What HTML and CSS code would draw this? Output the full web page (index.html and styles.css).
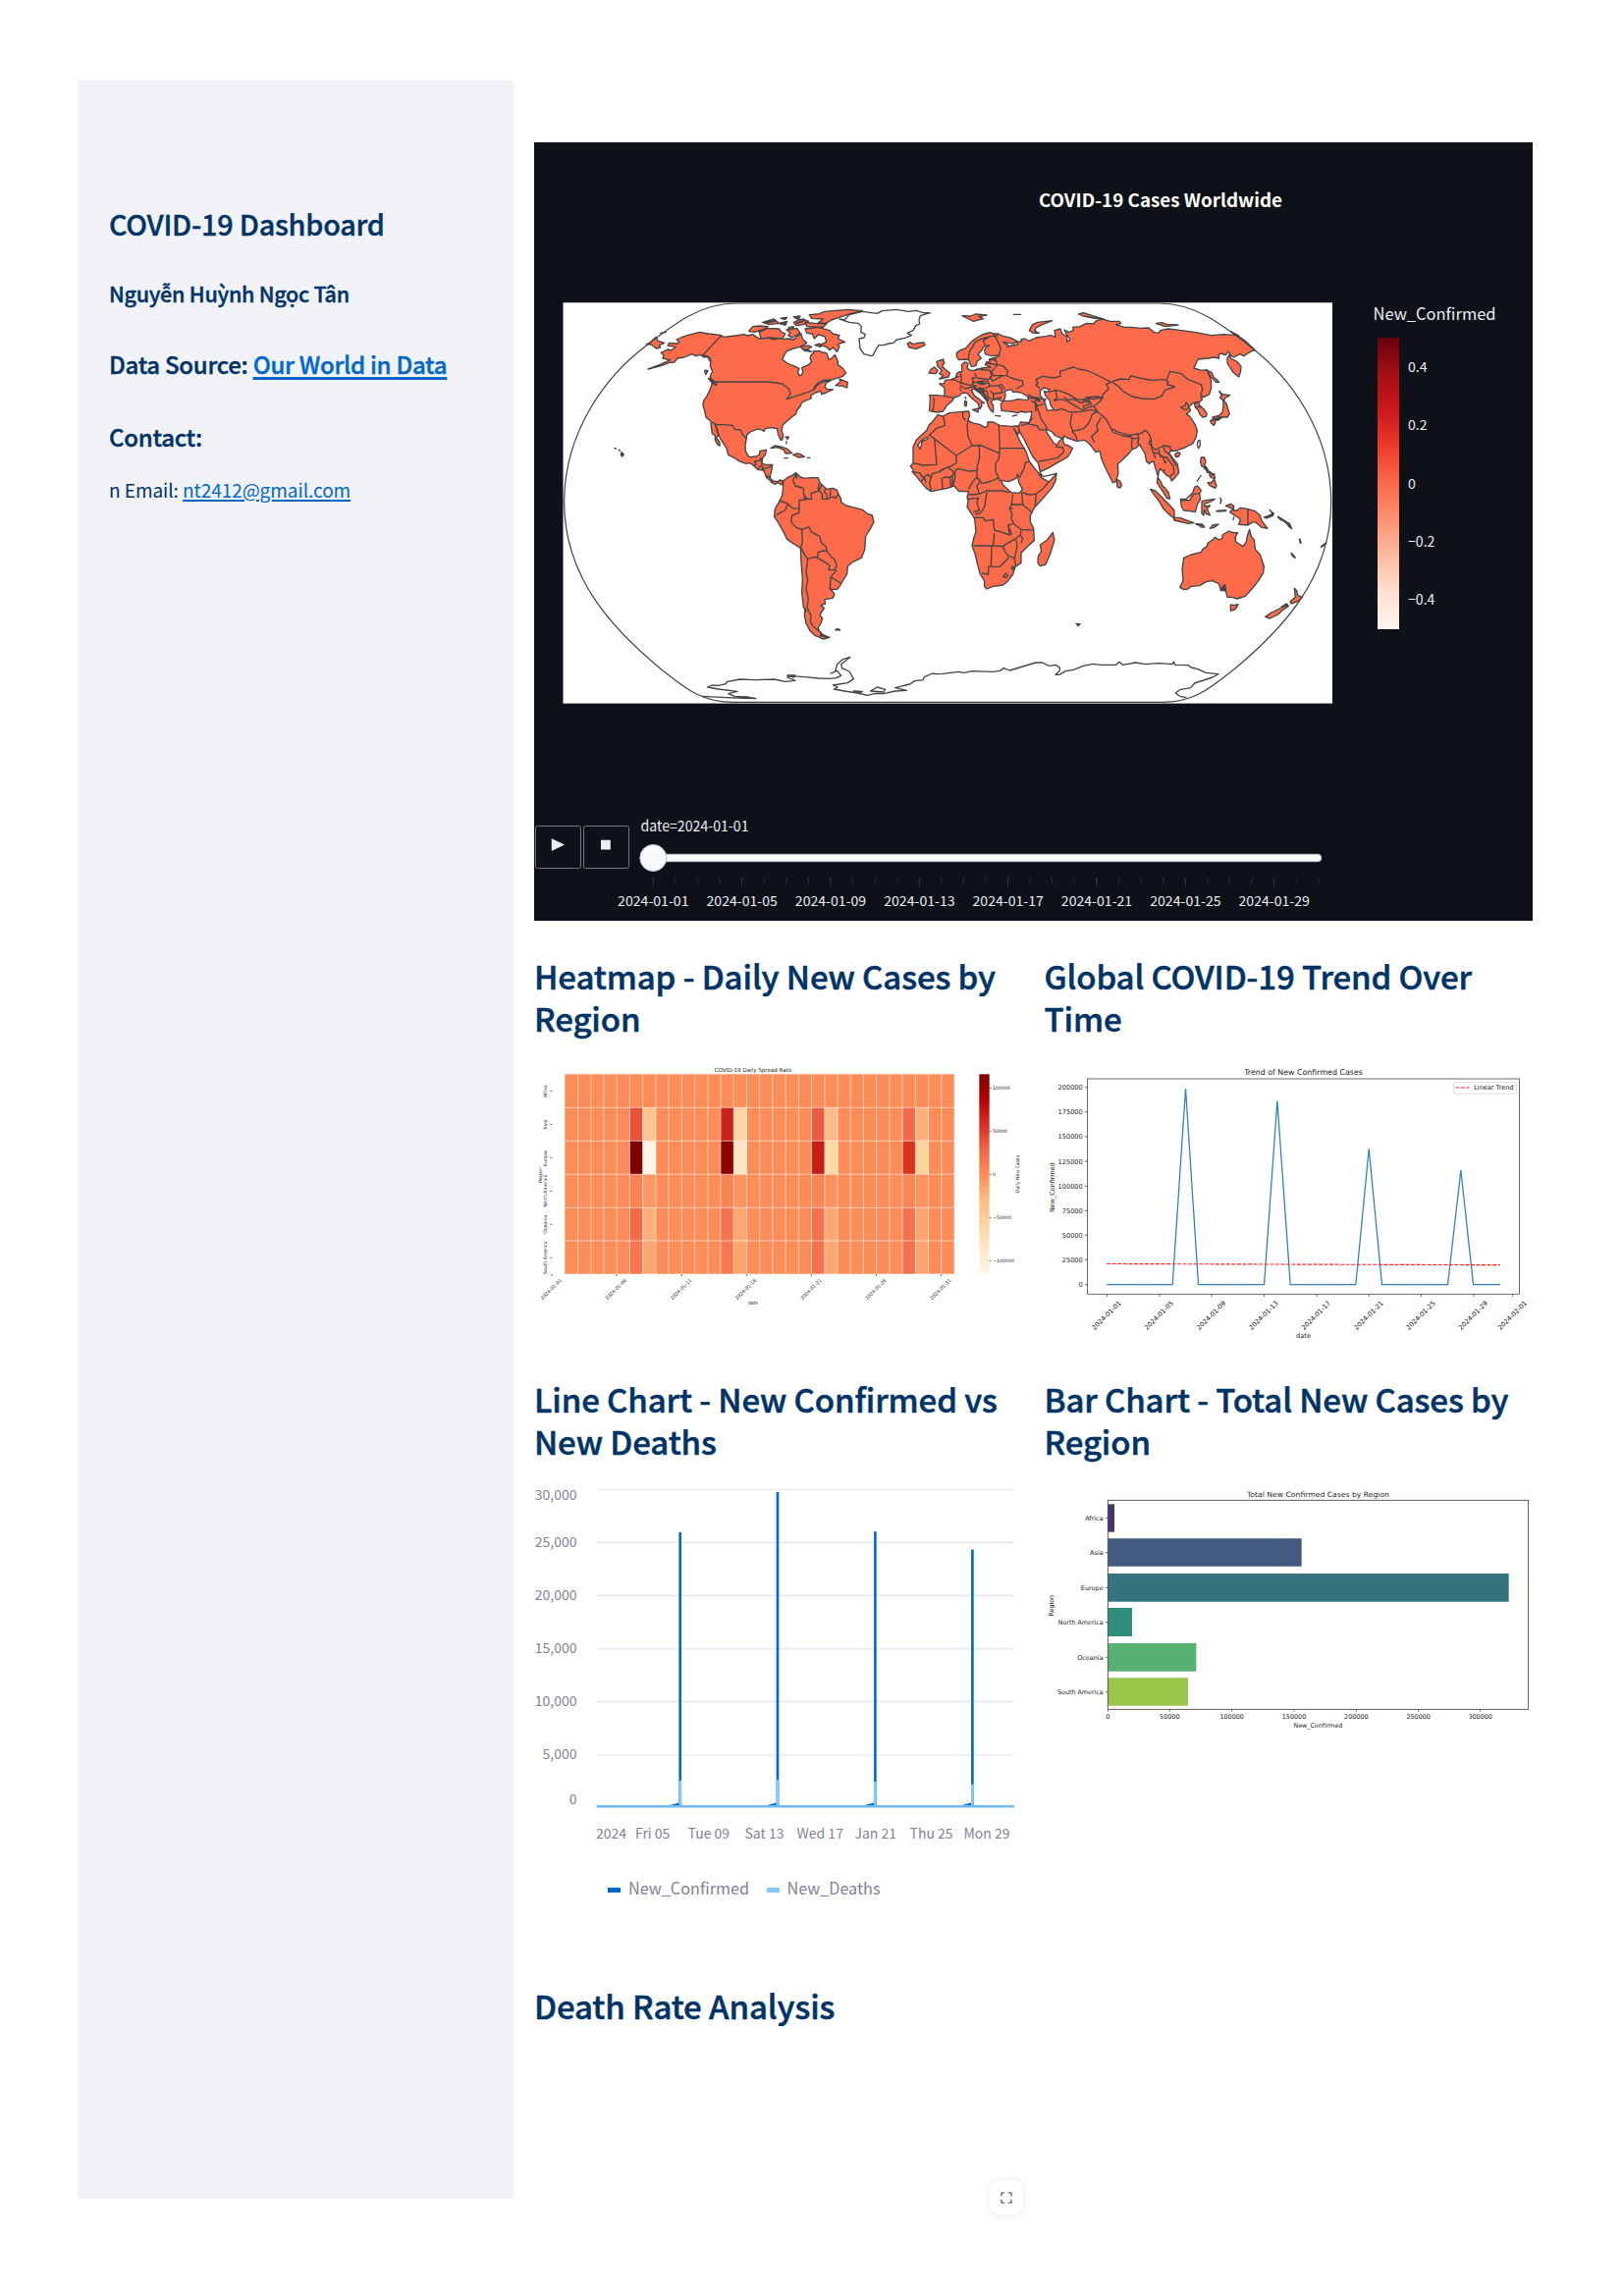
FILE: index.html
```html
<!DOCTYPE html>
<html lang="en">
<head>
<meta charset="utf-8">
<title>COVID-19 Dashboard</title>
<link rel="stylesheet" href="styles.css">
</head>
<body>
<div class="page">
<aside class="sidebar">
  <h1 class="side-title">COVID-19 Dashboard</h1>
  <h4 class="side-author">Nguyễn Huỳnh Ngọc Tân</h4>
  <h3 class="side-source">Data Source: <a href="#">Our World in Data</a></h3>
  <h3 class="side-contact">Contact:</h3>
  <p class="side-email">n Email: <a href="#">nt2412@gmail.com</a></p>
</aside>
<main class="main">
<svg class="map-panel" viewBox="544 145 1017 792.5">
  <defs>
    <linearGradient id="reds" x1="0" y1="1" x2="0" y2="0">
      <stop offset="0" stop-color="#fff5f0"/><stop offset=".125" stop-color="#fee0d2"/><stop offset=".25" stop-color="#fcbba1"/><stop offset=".375" stop-color="#fc9272"/><stop offset=".5" stop-color="#fb6a4a"/><stop offset=".625" stop-color="#ef3b2c"/><stop offset=".75" stop-color="#cb181d"/><stop offset=".875" stop-color="#a50f15"/><stop offset="1" stop-color="#67000d"/>
    </linearGradient>
  </defs>
  <rect class="panel-bg" x="544" y="145" width="1017" height="793"/>
  <text class="map-title" x="1058" y="210.7" textLength="248" lengthAdjust="spacingAndGlyphs">COVID-19 Cases Worldwide</text>
  <rect x="573.5" y="308.3" width="783.5" height="408.3" fill="#fff"/>
  <g transform="translate(540 290) scale(.333333)" class="land">
    <!-- Americas -->
    <path d="M400,208L420,198 430,201 445,190 420,186 425,178 450,180 456,175 447,168 460,162 480,155 518,145 545,150 580,154 592,160 625,156 655,152 662,156 680,152 692,160 700,165 715,158 725,160 740,168 765,162 775,166 790,165 805,168 815,158 828,150 832,166 845,178 825,190 800,197 785,203 778,212 770,228 785,240 810,250 822,256 818,268 822,278 830,276 833,266 830,254 850,245 860,235 855,225 858,215 867,207 865,203 885,203 892,207 905,208 912,228 920,226 925,220 932,215 940,235 940,245 955,255 965,270 955,280 925,290 895,292 880,300 870,310 865,322 880,305 895,297 920,292 905,300 900,312 908,320 925,320 905,330 890,335 888,325 872,330 858,338 858,348 840,355 830,360 825,372 815,384 812,395 795,408 772,428 768,445 773,462 770,474 765,475 757,455 755,440 735,437 718,440 715,448 700,441 690,443 672,450 662,460 660,475 657,490 658,508 665,522 672,527 690,525 700,520 702,508 722,505 718,520 710,530 708,547 720,550 740,550 738,565 732,590 742,600 755,602 763,597 773,600 768,612 758,605 748,610 735,603 735,600 722,590 718,578 712,567 695,565 682,553 672,545 660,547 640,540 625,530 605,520 600,500 590,485 578,465 572,445 565,428 575,460 568,468 578,480 580,492 574,490 565,475 565,462 556,455 553,435 552,418 537,405 533,385 528,370 530,355 540,340 550,320 557,298 550,280 557,265 550,250 552,228 545,220 530,222 520,214 505,218 495,212 470,222 450,225 440,237 425,238 400,248 360,258 395,245 415,236 428,230 405,225 408,215Z"/>
    <path class="border" d="M560,297H730L770,303 790,318 795,335 783,350 820,338 850,328 865,322M585,154L527,216 540,218 550,235M555,420L568,428 590,428 618,430 625,442 643,444 650,460 660,470M682,553L690,550 685,540 700,538 705,530 708,547M695,562L707,552 715,570M707,562L725,560 740,552M722,585L736,588M740,600L742,605"/>
    <path d="M668,142L680,128 700,126 727,128 710,138 685,145ZM700,145L725,133 760,135 768,145 780,150 770,165 730,162 705,165ZM783,138L815,133 825,148 800,162 788,155 795,148ZM840,135L880,130 915,140 925,150 945,155 940,165 962,175 940,182 945,190 938,205 925,192 915,200 905,190 885,185 905,175 900,158 880,153 868,165 862,150 845,148ZM853,92L880,90 900,82 970,76 1015,80 975,90 960,95 935,103 920,108 905,118 880,116 895,105 860,103ZM840,115L870,118 905,120 895,130 845,128ZM710,115L745,105 753,112 760,118 730,122ZM765,103L785,100 780,106ZM760,118L785,112 780,124ZM805,98L825,96 820,106ZM805,115L820,108 835,105 850,112 835,122 812,125ZM788,132L805,128 800,138ZM825,190L850,186 860,190 845,198 860,205 838,202ZM870,185L885,180 888,190ZM933,308L948,296 945,288 955,292 970,298 968,315 955,310ZM355,182L365,178 385,160 390,172 410,178 395,185 398,192 385,195 370,183ZM398,148L415,145 405,147ZM256,499L264,502M269,504L276,508M280,512L286,520 280,525 277,518ZM545,285L555,290 570,300 568,308 555,300ZM533,262L543,262 536,275ZM735,500L748,492 770,496 785,502 800,515 780,516 775,505 755,497ZM803,520L815,516 825,518 838,526 820,528ZM775,530L788,530M845,529L856,529M778,466L790,465 785,475M782,478L784,487"/>
    <path class="smudge" d="M716,117L750,110M768,103L782,102M765,119L780,117M808,101L820,99M812,118L838,110M835,197L855,203M545,288L565,303M278,515L283,522"/>
    <path class="no-data" d="M945,105L960,108 975,92 1015,82 1060,88 1075,80 1120,76 1155,82 1180,79 1200,86 1222,86 1192,95 1188,108 1190,120 1178,125 1170,140 1152,148 1165,155 1145,163 1120,168 1110,178 1095,180 1080,185 1065,185 1055,200 1048,215 1043,218 1020,212 1008,195 1005,165 1020,162 1024,152 1010,145 1012,128 1003,118 975,115Z"/>
    <path d="M1152,180L1160,176 1170,182 1185,178 1203,177 1206,185 1180,196 1158,192Z"/>
    <path d="M773,600L785,590 800,583 812,575 818,580 825,588 840,592 855,590 880,590 885,605 895,615 905,625 925,622 937,628 942,640 950,655 950,665 965,675 985,680 1015,688 1030,700 1045,705 1050,725 1040,745 1025,768 1022,810 1012,835 985,848 970,860 968,885 955,905 948,918 940,930 925,932 915,928 930,945 925,958 900,962 902,975 888,980 898,988 885,1010 893,1020 888,1035 880,1048 883,1060 895,1070 915,1078 895,1083 870,1072 855,1058 843,1035 838,1010 840,992 835,985 832,960 830,940 832,900 828,850 826,805 805,792 785,778 772,752 765,740 755,722 746,710 748,685 760,665 770,645 773,615Z"/>
    <path class="border" d="M812,578L803,598 810,615 835,622 836,640 845,655 860,655 858,638 882,630 890,612M882,608L880,625 892,640 892,655 908,655 905,640 898,632 902,625M908,655L925,648 933,652 942,640M918,625L916,650M845,658L838,648 838,658 822,658 822,697M760,660L785,668 800,682 822,685M788,670L778,690 762,698 752,706M822,697L800,705 797,725 812,742 830,748 832,785 826,805M830,748L852,740 858,755 885,770 890,790 903,800 907,815 895,813 880,818 878,835M878,835L900,848 915,858 912,872 930,872 937,858 930,840 920,832 907,815M828,805L838,825 848,838 870,832 878,835M848,838L843,880 848,900 843,930 850,960 846,985 852,1000 858,1010 856,1030 865,1045 885,1060M888,1060V1078M918,893L948,912M918,893L916,930M937,872L918,893"/>
    <path class="smudge" d="M932,1056L938,1053 948,1056M838,988L843,1000M885,1070L908,1078M812,576L814,592"/>
    <path class="border" d="M525,1258L600,1262 690,1265 665,1260 625,1258 605,1250 633,1243 575,1236 542,1230 555,1224 575,1225 598,1220 600,1214 640,1206 690,1208 745,1206 780,1213 810,1210 785,1200 795,1196 840,1199 880,1203 910,1204 935,1202 950,1195 938,1180 918,1188 932,1182 938,1160 955,1145 978,1138 950,1160 953,1172 975,1182 988,1205 970,1217 925,1224 940,1230 928,1236 960,1242 1000,1248 1030,1255 1055,1249 1080,1250 1115,1242 1150,1240 1115,1232 1130,1228 1160,1221 1175,1211 1200,1208 1205,1198 1230,1188 1240,1190 1260,1189 1310,1183 1325,1186 1350,1181 1415,1183 1435,1180 1447,1172 1465,1179 1545,1155 1565,1155 1580,1163 1590,1165 1605,1162 1618,1170 1618,1180 1605,1192 1617,1192 1635,1181 1660,1177 1690,1165 1720,1159 1745,1162 1790,1162 1800,1153 1810,1162 1850,1155 1880,1160 1920,1157 1962,1160 1966,1152 1970,1162 2010,1163 2020,1170 2040,1175 2065,1186 2103,1190 2085,1200 2030,1218 2018,1232 1985,1238 1972,1248 1985,1258 2005,1262M1040,1242L1060,1230 1085,1237 1080,1245ZM785,1194L810,1194 805,1200ZM988,1242L1015,1243 1005,1248Z"/>
  </g>
  <g transform="translate(940 290) scale(.333333)" class="land">
    <!-- Eurasia -->
    <path d="M103,208L115,200 130,195 150,172 165,162 180,153 205,146 215,150 230,150 245,157 270,163 287,173 280,180 262,178 245,175 260,184 258,190 270,186 290,184 285,172 300,176 300,168 310,165 325,172 345,162 375,158 390,155 405,160 402,140 420,135 425,150 440,158 440,175 450,168 438,150 432,138 445,145 460,140 458,130 480,128 500,118 520,120 530,110 550,105 570,112 600,112 605,118 590,122 615,130 635,130 665,133 690,132 705,145 720,148 725,140 750,135 790,140 830,145 880,155 920,152 960,155 985,172 1015,200 1000,205 980,218 968,212 950,222 938,214 940,225 960,235 972,250 970,268 965,282 948,268 930,240 930,225 938,210 932,205 925,215 910,210 903,215 905,225 890,222 870,225 840,228 828,255 850,262 868,260 880,290 881,315 875,335 862,342 850,345 853,352 843,360 845,370 858,380 868,395 865,403 855,405 845,395 842,385 832,375 830,365 840,358 825,362 818,368 805,382 795,380 788,375 800,370 805,360 810,368 818,385 805,395 815,402 830,425 838,445 835,465 825,485 800,498 780,505 772,508 758,507 752,515 765,532 778,548 782,575 770,590 760,600 755,588 745,583 735,573 725,562 720,575 718,590 728,605 732,615 740,622 750,635 755,655 745,652 735,635 728,625 715,605 718,585 710,560 705,540 698,542 690,547 683,540 678,515 668,500 662,488 650,500 640,503 630,515 612,533 595,548 597,575 590,602 580,605 570,585 555,555 545,530 540,508 528,512 510,488 495,475 470,478 440,468 432,462 425,470 405,462 395,450 385,445 375,440 380,455 392,472 400,485 410,490 415,480 430,465 428,478 432,488 445,492 457,500 450,515 440,528 410,545 380,562 358,572 352,545 335,525 320,495 308,470 298,455 290,440 298,420 325,422 330,405 333,388 310,390 300,387 290,392 270,388 240,385 238,365 245,357 228,350 215,352 208,358 215,370 215,390 208,385 200,372 195,355 175,332 155,318 148,322 158,340 172,350 188,362 178,362 180,370 174,380 168,362 150,348 135,332 122,330 110,340 95,345 90,355 72,370 62,387 45,390 30,388 20,385 22,345 20,338 40,338 66,340 66,315 50,303 65,302 68,292 85,290 100,285 103,272 112,266 120,265 118,245 128,236 138,240 135,255 145,262 158,262 180,255 208,252 190,245 195,235 205,238 202,228 225,222 235,215 210,218 190,212 188,198 202,185 185,190 180,200 168,212 178,225 165,235 162,248 148,250 140,230 125,228 110,230 103,220Z"/>
    <path class="no-data" d="M250,325L270,320 275,328 285,328 300,330 325,345 320,353 290,350 270,355 247,355 252,340ZM358,325L370,315 387,320 380,328 370,325 375,340 388,355 390,368 400,382 380,385 375,368 368,350 358,338Z"/>
    <path class="border" d="M358,318L345,305 352,302 345,290 365,280 400,285 420,280 418,265 460,252 475,258 500,262 520,270 575,298 560,305 568,318 550,335 548,345 530,342 500,345 490,352 470,350 445,335 420,325 405,322 385,328M578,296L605,288 630,290 635,278 660,285 700,292 740,290 750,298 745,305 770,312 740,322 730,340 705,350 670,348 640,342 610,325 600,312 578,298M745,290L755,265 790,272 810,290 850,305 855,320 848,335 855,345M550,345L540,358 522,372 535,390 550,402 560,412 575,440 600,452 630,460 665,455 680,445 690,455 697,472 690,485 710,505 735,492 755,495 758,507M578,440L578,450 610,462 635,465 635,458M635,465L640,470 660,470 655,455M545,405L530,430 535,445 515,465 525,483M455,395L450,425 458,448 490,440 505,425 512,410 518,395 535,388M400,385L425,380 450,390 480,388 515,382 530,388M455,448L468,462 470,475M345,370L355,390 360,410 375,430 378,440M300,430L320,425 350,432 355,442 372,445M320,425L335,408M355,540L380,535 410,530 430,512 428,498 405,495M345,345L343,360 345,388M405,322L410,345 400,355M400,355L420,350 440,355 465,370 490,385M430,345L445,352 460,350 485,362 505,350 515,365 490,370 492,380 520,370M500,345L520,350 550,345M640,470L637,490 640,503M660,470L655,485 662,488M697,472L700,505 705,515 710,530M705,515L720,515 735,530 740,545 745,540M720,505L725,525 745,528 765,555 768,575 755,585M735,495L740,510 755,520 775,555M735,565L740,570M832,375L852,372M318,345L345,348 375,350 370,360M330,355L345,362 350,370 370,365M320,335L340,345 355,345"/>
    <path class="border" d="M138,230L142,205 160,175 180,165 205,158 230,155M190,185L185,170 202,160M215,152L225,165 238,195 232,212M195,240L228,245 250,250M205,228L225,232M220,222L228,245 210,265 215,278 255,278 260,265 245,250M205,280L212,295 245,278M255,278L270,285 305,295 305,308 285,318M158,262L165,258 205,262 210,280 200,290 165,285 158,270M115,268L118,290 115,300 145,308 155,300 150,285 160,285M85,290L100,292 115,300M100,282L112,280M112,308L130,318 165,308M118,325L112,315M150,300L175,295 200,295M165,300L180,305 200,300 205,310 185,318 170,315M165,318L185,325 190,345M175,320L195,325 200,345 210,350M205,310L230,308 240,318 243,330 215,333 205,325M215,333L215,350 240,345M230,308L240,305 250,320M30,345L35,350 30,388M65,340L95,347M175,320L195,350"/>
    <path class="smudge" d="M152,306L165,322 185,332 200,355M345,350L358,357M492,352L508,361M172,300L188,301"/>
    <path d="M42,235L62,228 65,240 58,250 72,262 82,270 78,282 50,288 62,278 50,272 58,262 45,250ZM18,270L25,258 35,252 45,262 40,272ZM152,382L170,378 168,390ZM128,355L134,358 132,372 127,368ZM129,342L132,350M220,400L238,402M273,402L289,398M325,140L335,122 350,115 395,110 365,122 345,132 342,142 355,148 335,147ZM120,95L145,96 160,90 195,93 170,98 185,104 155,112 140,105ZM275,91L300,91M475,90L490,86 520,96 550,105 520,102 490,96ZM712,118L730,116 745,121 780,123 740,128ZM940,143L955,150 965,156 950,150ZM868,262L882,268 888,282 905,298 895,298 878,280ZM905,325L915,335 938,338 925,345 918,355 908,345 913,338ZM918,352L928,365 932,380 937,395 930,405 905,405 890,412 885,405 905,400 915,390 918,370ZM878,415L895,412 892,425 888,430 880,422ZM895,410L912,408 900,415ZM770,518L778,512 786,515 782,525 773,527ZM592,595L602,600 607,612 603,621 594,618ZM850,528L860,528 864,540 860,552 868,560 852,555 848,542ZM862,562L880,575 870,575ZM875,580L890,578 892,592 880,590ZM870,605L880,605 890,595 897,615 893,622 878,615ZM850,582L837,602M787,655L805,655 825,635 830,618 838,615 850,628 845,640 848,655 838,672 832,695 815,692 797,690 790,678ZM790,660L815,658 828,640 845,638M695,625L710,630 740,660 755,675 768,690 768,712 755,705 735,685 720,660 705,640ZM765,712L785,712 800,718 828,728 810,730 768,720ZM832,732L855,732M845,740L862,742M877,745L885,735 903,732 890,742ZM852,662L870,658 892,655 875,665 860,670 862,678 877,675 868,685 877,705 865,700 860,688 858,705 852,700ZM908,650L912,660 908,670M895,692L928,690M950,708L948,720M925,676L940,670 950,677 948,690 960,690 970,682 990,685 1015,692 1030,705 1035,722 1053,745 1035,742 1015,725 1005,727 993,735 965,733 970,720 965,712 945,700 938,695 947,685ZM993,686V735M1040,710L1050,714 1068,706M1058,688L1072,700 1068,708M1083,708L1092,718 1110,725 1120,730 1127,746 1115,736M1150,775L1155,792M1125,820L1138,835 1130,830ZM1215,803L1222,796 1234,788"/>
    <path d="M797,835L820,825 850,818 855,808 868,800 870,790 885,780 892,772 905,780 915,775 915,765 935,753 948,758 962,758 955,770 955,785 965,792 978,800 988,785 992,765 998,748 1003,770 1012,780 1015,808 1030,825 1035,840 1042,860 1040,880 1025,905 1005,930 985,952 960,960 945,955 930,955 925,935 910,935 905,915 885,905 865,908 845,920 820,922 810,930 797,932 785,925 795,905 792,870 795,850ZM940,978L950,980 963,977 955,992 940,997ZM1135,928L1142,935 1145,950 1160,955 1145,968 1125,975 1122,968 1138,955ZM1110,975L1117,982 1098,995 1085,1008 1060,1020 1046,1015 1065,1002 1090,990ZM468,1036L480,1037 475,1043Z"/>
    <path class="smudge" d="M922,918L925,935 912,930ZM858,560L872,566M873,570L888,582M1095,985L1115,978M835,732L860,738M1085,710L1108,724 1124,742M1045,711L1066,704 1070,697M1126,822L1136,832M1218,801L1228,793M1151,778L1154,790M898,692L926,691M882,413L905,409"/>
    <path class="no-data" d="M840,478L846,475 847,490 842,500 838,490Z"/>
    <!-- Africa -->
    <path d="M45,398L62,402 80,392 120,388 140,387 143,400 138,415 150,422 175,428 190,437 197,432 198,420 215,420 235,430 270,433 290,432 295,445 290,458 278,440 300,485 315,510 325,540 340,560 352,575 362,590 380,597 408,577 405,600 395,620 365,655 340,682 328,705 328,725 338,745 340,782 325,795 300,820 300,850 282,862 275,885 260,905 245,918 215,922 195,930 188,922 188,905 175,885 168,860 160,825 150,798 155,775 162,755 158,715 150,702 135,680 138,662 135,648 140,632 128,632 110,632 95,615 75,622 60,625 45,628 25,632 10,622 0,610 -15,592 -30,575 -30,565 -38,555 -30,545 -30,495 -20,475 0,455 12,445 18,430 30,418Z"/>
    <path class="border" d="M62,402L68,430 40,440 20,460 102,522 150,492 165,492 175,490 232,515M122,388L122,405 130,415M138,415L135,432 138,465 150,490M232,430L235,500 312,500M235,500L232,532 222,545 222,570 235,600M172,492L173,530 165,560 168,568M102,522L102,545 85,555 65,562 50,570M98,570L105,562 140,570 165,568 165,588 150,605 140,625M98,570L98,590 92,612M165,588L175,600 180,608 210,600 232,590M35,470L42,550 0,552 -30,545M35,470L20,460M25,590L28,578 50,572 75,558 90,568 95,580 82,588 60,590M58,590L60,625M82,588L85,620M90,585V615M-35,572L-10,575 0,590 15,580 25,590 20,605 25,630M-8,602L5,592 10,605M175,600L165,615 172,640 140,642M172,640L195,630 240,630 265,635M325,540L312,545 310,560 302,575 295,590M302,635L325,642 345,640 365,625 385,603M345,640L343,678M302,635L305,672 335,698M275,640L270,672 305,672M195,635L188,680 175,698 160,702M158,712L185,712 190,722 215,718 218,750 235,755 265,765 260,735 272,732M270,672L265,685 272,700 270,715 278,732 300,748 335,750M138,655L170,652 165,665 172,690 155,695M155,798L215,798 218,760M215,798L245,800 262,788 285,775 298,765 300,748M285,780L288,800 280,835 262,830 248,812 245,800M210,800L208,860 200,862 200,885 180,882M208,862L235,862 262,835M280,835L283,860M262,740L272,765M298,765L305,775 300,790M252,883L260,888 255,896 245,893ZM275,861L280,866 275,872 270,866ZM265,680L275,685"/>
    <path class="no-data" d="M238,598L262,602 285,592 290,578 292,602 304,625 295,637 270,635 255,622 245,612ZM357,574L368,587 408,577 385,603 362,590ZM-16,490L0,472 15,465 15,472 -2,478 -8,502Z"/>
    <path d="M397,757L402,780 390,820 375,855 358,860 351,850 352,830 362,815 358,795 380,780Z"/>
  </g>
  <g transform="translate(540 290) scale(.333333)">
    <path class="globe-line" d="M630,57C520,57 440,120 355,186C230,280 104,450 104,665C104,900 260,1060 400,1175C470,1230 520,1276 620,1276H1931C2031,1276 2081,1230 2151,1175C2291,1060 2447,900 2447,665C2447,450 2321,280 2196,186C2111,120 2031,57 1921,57Z"/>
  </g>
  <rect x="1403" y="344" width="22" height="297" fill="url(#reds)"/>
  <g class="map-text">
    <text x="1398.5" y="326" font-size="16.8" textLength="125" lengthAdjust="spacingAndGlyphs">New_Confirmed</text>
    <text x="1434" y="379">0.4</text><text x="1434" y="438.2">0.2</text><text x="1434" y="498">0</text><text x="1434" y="557">−0.2</text><text x="1434" y="616">−0.4</text>
    <text x="652.5" y="847" font-size="15" textLength="110" lengthAdjust="spacingAndGlyphs">date=2024-01-01</text>
    <g text-anchor="middle">
      <text x="665.3" y="922.6">2024-01-01</text><text x="755.7" y="922.6">2024-01-05</text><text x="846" y="922.6">2024-01-09</text><text x="936.4" y="922.6">2024-01-13</text><text x="1026.7" y="922.6">2024-01-17</text><text x="1117" y="922.6">2024-01-21</text><text x="1207.4" y="922.6">2024-01-25</text><text x="1297.7" y="922.6">2024-01-29</text>
    </g>
  </g>
  <g class="map-button"><rect x="545.5" y="841.5" width="46" height="43" rx="2"/><rect x="594.5" y="841.5" width="46" height="43" rx="2"/></g>
  <path fill="#e9edf5" d="M561.8,854.3L575,860.6 561.8,867ZM612,855.8H621.8V865.6H612Z"/>
  <path stroke="#333" stroke-width="5.5" stroke-dasharray="1 21.58" d="M664.8,896.8H1344"/>
  <path stroke="#333" stroke-width="9" stroke-dasharray="1 89.33" d="M664.8,898.5H1344"/>
  <rect class="rail" x="655" y="870.3" width="690.7" height="7.4" rx="3.5"/>
  <circle class="rail" cx="665.3" cy="874" r="13.5"/>
</svg>

<div class="grid">
<section>
<h2>Heatmap - Daily New Cases by Region</h2>
<svg class="chart-top" viewBox="544 1059 497.5 343.5">
<g transform="translate(540 1070) scale(.333333)" class="plot">
  <rect x="106" y="73" width="1190" height="611" fill="#fc8d59"/>
  <path fill="#e6533a" d="M304,175h40v102h-40z"/><path fill="#7f0000" d="M304,277h40v102h-40z"/><path fill="#fa8355" d="M304,379h40v102h-40z"/><path fill="#f16a4a" d="M304,481h40v102h-40z"/><path fill="#f57550" d="M304,583h40v101h-40z"/>
  <path fill="#fdc590" d="M344,175h40v102h-40z"/><path fill="#fff6ea" d="M344,277h40v102h-40z"/><path fill="#fc9863" d="M344,379h40v102h-40z"/><path fill="#fdb07b" d="M344,481h40v102h-40z"/><path fill="#fda671" d="M344,583h40v101h-40z"/>
  <path fill="#c8221a" d="M582,175h40v102h-40z"/><path fill="#8b0000" d="M582,277h40v102h-40z"/><path fill="#fa8253" d="M582,379h40v102h-40z"/><path fill="#f5734e" d="M582,481h40v102h-40z"/><path fill="#f77850" d="M582,583h40v101h-40z"/>
  <path fill="#fdd8a5" d="M622,175h40v102h-40z"/><path fill="#fee5c6" d="M622,277h40v102h-40z"/><path fill="#fc9560" d="M622,379h40v102h-40z"/><path fill="#fda772" d="M622,481h40v102h-40z"/><path fill="#fda56f" d="M622,583h40v101h-40z"/>
  <path fill="#ea5d43" d="M860,175h40v102h-40z"/><path fill="#c51e15" d="M860,277h40v102h-40z"/><path fill="#fa8655" d="M860,379h40v102h-40z"/><path fill="#f4724e" d="M860,481h40v203h-40z"/>
  <path fill="#fdbc87" d="M900,175h40v102h-40z"/><path fill="#fddaa8" d="M900,277h40v102h-40z"/><path fill="#fc935e" d="M900,379h40v102h-40z"/><path fill="#fda772" d="M900,481h40v203h-40z"/>
  <path fill="#ef6b4c" d="M1138,175h40v102h-40z"/><path fill="#d8331f" d="M1138,277h40v102h-40z"/><path fill="#f98755" d="M1138,379h40v102h-40z"/><path fill="#f4724e" d="M1138,481h40v203h-40z"/>
  <path fill="#fdb07a" d="M1178,175h40v102h-40z"/><path fill="#fdd39c" d="M1178,277h40v102h-40z"/><path fill="#fc925d" d="M1178,379h40v102h-40z"/><path fill="#fda570" d="M1178,481h40v203h-40z"/>
  <path stroke="#fff" stroke-opacity=".55" stroke-width="611" stroke-dasharray="3 36.67" d="M144.2,378.5H1296"/>
  <path stroke="#fff" stroke-opacity=".55" stroke-width="1190" stroke-dasharray="3 98.83" d="M701,173.5V684"/>
  <linearGradient id="orrd" x1="0" y1="1" x2="0" y2="0"><stop offset="0" stop-color="#fff7ec"/><stop offset=".125" stop-color="#fee8c8"/><stop offset=".25" stop-color="#fdd49e"/><stop offset=".375" stop-color="#fdbb84"/><stop offset=".5" stop-color="#fc8d59"/><stop offset=".625" stop-color="#ef6548"/><stop offset=".75" stop-color="#d7301f"/><stop offset=".875" stop-color="#b30000"/><stop offset="1" stop-color="#7f0000"/></linearGradient>
  <rect x="1372" y="73" width="31" height="611" fill="url(#orrd)"/>
  <path class="tick" d="M61,124h6M61,226h6M61,328h6M61,430h6M61,532h6M61,634h6M66,684v6M264,684v6M463,684v6M661,684v6M859,684v6M1057,684v6M1256,684v6M1403,115h6M1403,247h6M1403,379h6M1403,511h6M1403,643h6"/>
  <text x="563" y="65" font-size="17" textLength="236" lengthAdjust="spacingAndGlyphs">COVID-19 Daily Spread Rate</text>
  <g font-size="14.5" text-anchor="middle">
    <text transform="translate(52 125) rotate(-90)" textLength="38" lengthAdjust="spacingAndGlyphs">Africa</text><text transform="translate(52 227) rotate(-90)" textLength="29" lengthAdjust="spacingAndGlyphs">Asia</text><text transform="translate(52 330) rotate(-90)" textLength="48" lengthAdjust="spacingAndGlyphs">Europe</text><text transform="translate(52 430) rotate(-90)" textLength="99" lengthAdjust="spacingAndGlyphs">North America</text><text transform="translate(52 532) rotate(-90)" textLength="56" lengthAdjust="spacingAndGlyphs">Oceania</text><text transform="translate(52 634) rotate(-90)" textLength="100" lengthAdjust="spacingAndGlyphs">South America</text>
    <text transform="translate(35 381) rotate(-90)" textLength="48" lengthAdjust="spacingAndGlyphs">Region</text><text transform="translate(1494 378) rotate(-90)" textLength="114" lengthAdjust="spacingAndGlyphs">Daily New Cases</text>
    <text x="681" y="776" textLength="30" lengthAdjust="spacingAndGlyphs">date</text>
  </g>
  <g font-size="14.5" text-anchor="end">
    <text transform="translate(97 704) rotate(-45)">2024-01-01</text><text transform="translate(295 704) rotate(-45)">2024-01-06</text><text transform="translate(494 704) rotate(-45)">2024-01-11</text><text transform="translate(692 704) rotate(-45)">2024-01-16</text><text transform="translate(891 704) rotate(-45)">2024-01-21</text><text transform="translate(1089 704) rotate(-45)">2024-01-26</text><text transform="translate(1287 704) rotate(-45)">2024-01-31</text>
  </g>
  <g font-size="14.2"><text x="1413" y="120">100000</text><text x="1413" y="252">50000</text><text x="1413" y="384">0</text><text x="1413" y="516">−50000</text><text x="1413" y="648">−100000</text></g>
</g>
</svg>
</section>
<section>
<h2>Global COVID-19 Trend Over Time</h2>
<svg class="chart-top" viewBox="1063.5 1059 497.5 343.5">
<g transform="translate(1049.7 1070) scale(.333333)" class="plot">
  <rect x="172" y="87" width="1320" height="658" fill="none" stroke="#555" stroke-width="2.6"/>
  <path class="tick" d="M164,113h8M164,188h8M164,264h8M164,339h8M164,415h8M164,490h8M164,565h8M164,640h8M164,716h8M232,745v8M392,745v8M551,745v8M712,745v8M872,745v8M1032,745v8M1192,745v8M1352,745v8M1471,745v8"/>
  <path fill="none" stroke="#3081bb" stroke-width="3.8" d="M231,716H432L472,117 511,716H712L752,155 792,716H992L1032,301 1072,716H1273L1313,366 1351,716H1433"/>
  <path stroke="#ff2020" stroke-width="3.4" stroke-dasharray="12 4.6" d="M231,652.5L1433,656"/>
  <rect x="1291" y="97" width="192" height="36" rx="4" fill="#fff" stroke="#ccc" stroke-width="2"/>
  <path stroke="#ff2020" stroke-width="3.6" stroke-dasharray="12 4" d="M1297,114H1338"/>
  <text x="651" y="74" font-size="24" textLength="362" lengthAdjust="spacingAndGlyphs">Trend of New Confirmed Cases</text>
  <text x="1353" y="121" font-size="20" textLength="121" lengthAdjust="spacingAndGlyphs">Linear Trend</text>
  <g font-size="20" text-anchor="end"><text x="158" y="121">200000</text><text x="158" y="196">175000</text><text x="158" y="271">150000</text><text x="158" y="347">125000</text><text x="158" y="422">100000</text><text x="158" y="497">75000</text><text x="158" y="573">50000</text><text x="158" y="648">25000</text><text x="158" y="723">0</text>
    <text transform="translate(276 774) rotate(-45)">2024-01-01</text><text transform="translate(436 774) rotate(-45)">2024-01-05</text><text transform="translate(596 774) rotate(-45)">2024-01-09</text><text transform="translate(756 774) rotate(-45)">2024-01-13</text><text transform="translate(916 774) rotate(-45)">2024-01-17</text><text transform="translate(1077 774) rotate(-45)">2024-01-21</text><text transform="translate(1236 774) rotate(-45)">2024-01-25</text><text transform="translate(1396 774) rotate(-45)">2024-01-29</text><text transform="translate(1516 774) rotate(-45)">2024-02-01</text>
  </g>
  <g font-size="20" text-anchor="middle"><text transform="translate(70 419) rotate(-90)" textLength="152" lengthAdjust="spacingAndGlyphs">New_Confirmed</text><text x="832" y="878">date</text></g>
</g>
</svg>
</section>
<section>
<h2>Line Chart - New Confirmed vs New Deaths</h2>
<svg class="chart-bottom" viewBox="544 1490 497.5 530.5">
  <path stroke="#e6eaf1" stroke-width="1.6" d="M608,1517.7H1033M608,1571.4H1033M608,1625.4H1033M608,1679.6H1033M608,1733.4H1033M608,1787.7H1033"/>
  <path fill="#0068c9" d="M678.5,1840L691.5,1836.5H694L694.5,1839 704,1840ZM777.5,1840L790.5,1836.5H793L793.5,1839 804,1840ZM877,1840L890,1836.5H892.5L893,1839 903,1840ZM976,1840L989,1836.5H991.5L992,1839 1001,1840Z"/>
  <path stroke="#0068c9" stroke-width="2.6" d="M692.7,1561V1840M792,1520V1840M891.4,1560.3V1840M990.4,1578.5V1840"/>
  <path stroke="#83c9ff" stroke-width="2.8" d="M692.9,1813.7V1840M792,1813V1840M891.3,1815V1840M990.4,1817.8V1840"/>
  <path stroke="#73bcf5" stroke-width="2.4" d="M607.5,1840.3H1033"/>
  <g class="axis" text-anchor="end"><text x="587.5" y="1528">30,000</text><text x="587.5" y="1576">25,000</text><text x="587.5" y="1630">20,000</text><text x="587.5" y="1684">15,000</text><text x="587.5" y="1738">10,000</text><text x="587.5" y="1792">5,000</text><text x="587.5" y="1838">0</text></g>
  <g class="axis"><text x="607" y="1873">2024</text><text x="647" y="1873">Fri 05</text><text x="700.5" y="1873">Tue 09</text><text x="758.5" y="1873">Sat 13</text><text x="811.5" y="1873">Wed 17</text><text x="870.5" y="1873">Jan 21</text><text x="926.5" y="1873">Thu 25</text><text x="981.5" y="1873">Mon 29</text></g>
  <rect x="619" y="1923" width="13" height="5" fill="#0068c9"/><rect x="781" y="1923" width="13" height="5" fill="#83c9ff"/>
  <g class="axis legend"><text x="640" y="1930" textLength="123" lengthAdjust="spacingAndGlyphs">New_Confirmed</text><text x="801.5" y="1930" textLength="95" lengthAdjust="spacingAndGlyphs">New_Deaths</text></g>
</svg>
</section>
<section>
<h2>Bar Chart - Total New Cases by Region</h2>
<svg class="chart-bottom" viewBox="1063.5 1490 497.5 530.5">
<g transform="translate(1049.5 1390) scale(.333333)" class="plot">
  <path fill="#48366f" d="M235,427h20v85h-20z"/><path fill="#415b80" d="M235,532h592v85h-592z"/><path fill="#33747f" d="M235,639h1225v86h-1225z"/><path fill="#308f7c" d="M235,744h74v87h-74z"/><path fill="#59b073" d="M235,852h270v86h-270z"/><path fill="#99c54b" d="M235,958h245v85h-245z"/>
  <rect x="235" y="415" width="1285" height="639" fill="none" stroke="#444" stroke-width="2.6"/>
  <path class="tick" d="M228,469h7M228,575h7M228,682h7M228,788h7M228,895h7M228,1001h7M235,1054v7M424,1054v7M614,1054v7M804,1054v7M994,1054v7M1184,1054v7M1373,1054v7"/>
  <text x="660" y="404" font-size="22" textLength="435" lengthAdjust="spacingAndGlyphs">Total New Confirmed Cases by Region</text>
  <g font-size="19.5" text-anchor="end"><text x="221" y="476">Africa</text><text x="221" y="582">Asia</text><text x="221" y="689">Europe</text><text x="221" y="795" textLength="138" lengthAdjust="spacingAndGlyphs">North America</text><text x="221" y="902">Oceania</text><text x="221" y="1008" textLength="140" lengthAdjust="spacingAndGlyphs">South America</text></g>
  <g font-size="19.3" text-anchor="middle"><text x="235" y="1082">0</text><text x="424" y="1082">50000</text><text x="614" y="1082">100000</text><text x="804" y="1082">150000</text><text x="994" y="1082">200000</text><text x="1184" y="1082">250000</text><text x="1373" y="1082">300000</text><text x="877" y="1109" textLength="149" lengthAdjust="spacingAndGlyphs">New_Confirmed</text><text transform="translate(69 737) rotate(-90)" textLength="64" lengthAdjust="spacingAndGlyphs">Region</text></g>
</g>
</svg>
</section>
<section>
<h2>Death Rate Analysis</h2>
<div class="toolbar"><button class="fullscreen" aria-label="Fullscreen"><svg width="12" height="12" viewBox="0 0 12 12"><path d="M1,4.2V1H4.2M7.8,1H11V4.2M11,7.8V11H7.8M4.2,11H1V7.8"/></svg></button></div>
</section>
</div>
</main>
</div>
</body>
</html>
```
FILE: styles.css
```css
* { box-sizing: border-box; }
body { margin: 0; background: #fff; font-family: "Noto Sans CJK SC", "Noto Sans", sans-serif; color: #003366; }
.page { display: flex; gap: 21px; width: 1653px; height: 2339px; padding: 82px 92px 0 79px; }
.sidebar { width: 444px; height: 2158px; padding: 0 32px; background: #f0f2f6; }
.sidebar > * { margin: 0; font-weight: 500; white-space: nowrap; -webkit-text-stroke: .4px currentColor; }
.sidebar a { color: #0068c9; text-decoration-thickness: 3px; text-underline-offset: 3px; text-decoration-skip-ink: none; }
.side-title { padding-top: 124px; font-size: 28.8px; line-height: 44px; letter-spacing: -.22px; }
.side-author { padding-top: 34px; font-size: 21.5px; line-height: 30px; letter-spacing: -.26px; }
.side-source { padding-top: 40px; font-size: 24px; line-height: 34px; letter-spacing: -.26px; }
.side-contact { padding-top: 40px; font-size: 24px; line-height: 34px; letter-spacing: -.26px; }
.sidebar .side-email { padding-top: 22px; font-size: 19px; line-height: 30px; font-weight: 400; letter-spacing: -.05px; -webkit-text-stroke: 0; }
.sidebar .side-email a { text-decoration-thickness: 2px; text-underline-offset: 2px; text-decoration-skip-ink: auto; }
.main { width: 1017px; padding-top: 63px; }
svg { display: block; }
.map-panel { width: 1017px; height: 792.5px; }
.panel-bg { fill: #0e1117; }
.map-title { fill: #fff; font-size: 18.5px; font-weight: 700; }
.map-text { fill: #e9edf5; font-size: 14.1px; }
.land path { fill: #fd6b4b; stroke: #444; stroke-width: 4; stroke-linejoin: round; }
.land .border { fill: none; }
.land .no-data { fill: #fff; }
.land .smudge { fill: #444; stroke-width: 6; }
.land .smudge:not([d*="Z"]) { fill: none; }
.globe-line { fill: none; stroke: #444; stroke-width: 3.6; }
.map-button rect { fill: none; stroke: #7b8494; stroke-width: .9; }
.rail { fill: #f8fafc; stroke: #bec8d9; stroke-width: 1; }
.grid { display: grid; grid-template-columns: 497.5px 497.5px; column-gap: 22px; padding-top: 34px; }
h2 { height: 87.5px; margin: 0; padding-top: 1px; font-size: 33px; line-height: 43.7px; font-weight: 500; letter-spacing: -.1px; -webkit-text-stroke: .5px currentColor; }
.chart-top { width: 497.5px; height: 343.5px; }
.chart-bottom { width: 497.5px; height: 530.5px; }
.plot { font-family: "DejaVu Sans", sans-serif; fill: #222; }
.tick { fill: none; stroke: #444; stroke-width: 2.4; }
.axis { fill: #808495; font-size: 14px; }
.legend { font-size: 16.6px; }
.toolbar { display: flex; justify-content: flex-end; padding-top: 113px; }
.fullscreen { display: flex; align-items: center; justify-content: center; width: 34px; height: 35px; border: 0; border-radius: 11px; background: #fff; box-shadow: 0 1px 9px rgba(0, 0, 0, .09); }
.fullscreen path { fill: none; stroke: #808086; stroke-width: 1.7; }
```
